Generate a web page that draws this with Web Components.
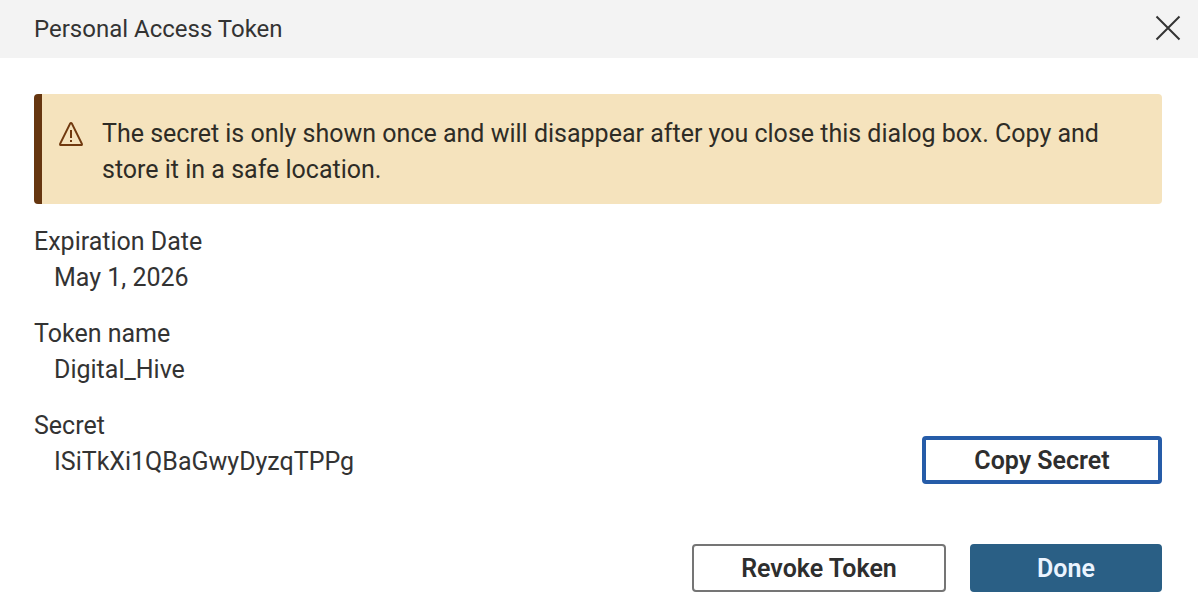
<!DOCTYPE html>
<html lang="en">
<head>
<meta charset="utf-8">
<meta name="viewport" content="width=device-width, initial-scale=1">
<title>Personal Access Token</title>
<style>
  body {
    margin: 0;
    background: #fff;
    color: #333;
    font-family: Roboto, "Liberation Sans", sans-serif;
    font-size: 25px;
    line-height: 36px;
  }
</style>
</head>
<body>
<token-dialog></token-dialog>

<script>
const dialogStyles = `
    <style>
        :host {
            display: block;
        }

        .header {
            display: flex;
            align-items: center;
            justify-content: space-between;
            height: 58px;
            padding: 0 16px 0 34px;
            background-color: #f3f3f3;
        }

        h1 {
            margin: 0;
            font-size: 24px;
            font-weight: 400;
        }

        .close {
            display: flex;
            padding: 0;
            border: 0;
            background: none;
            color: #333;
            cursor: pointer;
        }

        .content {
            display: flex;
            flex-direction: column;
            gap: 16px;
            padding: 36px 36px 0 34px;
        }

        warning-banner {
            margin-bottom: 4px;
        }

        .secret-row {
            display: flex;
            align-items: flex-end;
            justify-content: space-between;
        }

        .footer {
            display: flex;
            justify-content: flex-end;
            gap: 24px;
            padding: 60px 36px 24px;
        }
    </style>
`;

class TokenDialog extends HTMLElement {
  constructor() {
    super();
    this.root = this.attachShadow({ mode: 'open' });
    this.renderHTML();
    this.bindEvents();
  }

  bindEvents() {
    this.root
      .querySelector('.copy')
      .addEventListener('click', () => this.copySecret());
  }

  copySecret() {
    const secret = this.root.querySelector('.secret').textContent.trim();
    if (navigator.clipboard) {
      navigator.clipboard.writeText(secret).catch(() => {});
    }
  }

  renderHTML() {
    this.root.innerHTML = `
        ${dialogStyles}
        <section role="dialog" aria-labelledby="title">
            <header class="header">
                <h1 id="title">Personal Access Token</h1>
                <button class="close" type="button" aria-label="Close">
                    <svg width="28" height="28" viewBox="0 0 28 28" fill="none" stroke="currentColor" stroke-width="2">
                        <path d="M2.5 1.5 25.5 24.5M25.5 1.5 2.5 24.5"/>
                    </svg>
                </button>
            </header>
            <div class="content">
                <warning-banner>The secret is only shown once and will disappear after you close this dialog box. Copy and store it in a safe location.</warning-banner>
                <token-field label="Expiration Date">May 1, 2026</token-field>
                <token-field label="Token name">Digital_Hive</token-field>
                <div class="secret-row">
                    <token-field class="secret" label="Secret">ISiTkXi1QBaGwyDyzqTPPg</token-field>
                    <action-button class="copy" variant="focused">Copy Secret</action-button>
                </div>
            </div>
            <footer class="footer">
                <action-button variant="outline">Revoke Token</action-button>
                <action-button variant="primary">Done</action-button>
            </footer>
        </section>
      `;
  }
}

const bannerStyles = `
    <style>
        :host {
            display: flex;
            gap: 18px;
            padding: 22px 40px 16px 16px;
            border-left: 8px solid #663610;
            border-radius: 4px;
            background-color: #f5e3bd;
            color: #2e2c26;
        }

        svg {
            flex: none;
            margin-top: 5px;
            color: #70390f;
        }

        p {
            margin: 0;
        }
    </style>
`;

class WarningBanner extends HTMLElement {
  constructor() {
    super();
    this.root = this.attachShadow({ mode: 'open' });
    this.root.innerHTML = `
        ${bannerStyles}
        <svg width="26" height="26" viewBox="0 0 26 26" fill="none" stroke="currentColor" stroke-width="2" stroke-linejoin="round" aria-hidden="true">
            <path d="M12.1 2.6 2.2 22.6Q1.6 24 3 24H23Q24.4 24 23.8 22.6L13.9 2.6Q13 1.4 12.1 2.6Z"/>
            <path d="M13 9V17M13 19V21"/>
        </svg>
        <p><slot></slot></p>
      `;
  }
}

const fieldStyles = `
    <style>
        :host {
            display: block;
            padding-bottom: 4px;
        }

        dl, dd {
            margin: 0;
        }

        dd {
            padding-left: 20px;
        }
    </style>
`;

class TokenField extends HTMLElement {
  constructor() {
    super();
    this.root = this.attachShadow({ mode: 'open' });
    this.root.innerHTML = `
        ${fieldStyles}
        <dl>
            <dt></dt>
            <dd><slot></slot></dd>
        </dl>
      `;
  }

  static get observedAttributes() {
    return ['label'];
  }

  attributeChangedCallback(name, oldValue, newValue) {
    this.root.querySelector('dt').textContent = newValue;
  }
}

const buttonStyles = `
    <style>
        :host {
            display: block;
        }

        button {
            box-sizing: border-box;
            height: 48px;
            min-width: 192px;
            padding: 2px 40px 0;
            border: 2px solid #757575;
            border-radius: 4px;
            background-color: #fff;
            color: #2e2e2e;
            font: inherit;
            font-weight: 600;
            cursor: pointer;
        }

        :host([variant="focused"]) button {
            min-width: 240px;
            border: 4px solid #265ca8;
        }

        :host([variant="outline"]) button {
            min-width: 254px;
        }

        :host([variant="primary"]) button {
            border-color: #2a5f85;
            background-color: #2a5f85;
            color: #ebf4ff;
        }
    </style>
`;

class ActionButton extends HTMLElement {
  constructor() {
    super();
    this.root = this.attachShadow({ mode: 'open' });
    this.root.innerHTML = `
        ${buttonStyles}
        <button type="button"><slot></slot></button>
      `;
  }
}

customElements.define('warning-banner', WarningBanner);
customElements.define('token-field', TokenField);
customElements.define('action-button', ActionButton);
customElements.define('token-dialog', TokenDialog);
</script>
</body>
</html>
